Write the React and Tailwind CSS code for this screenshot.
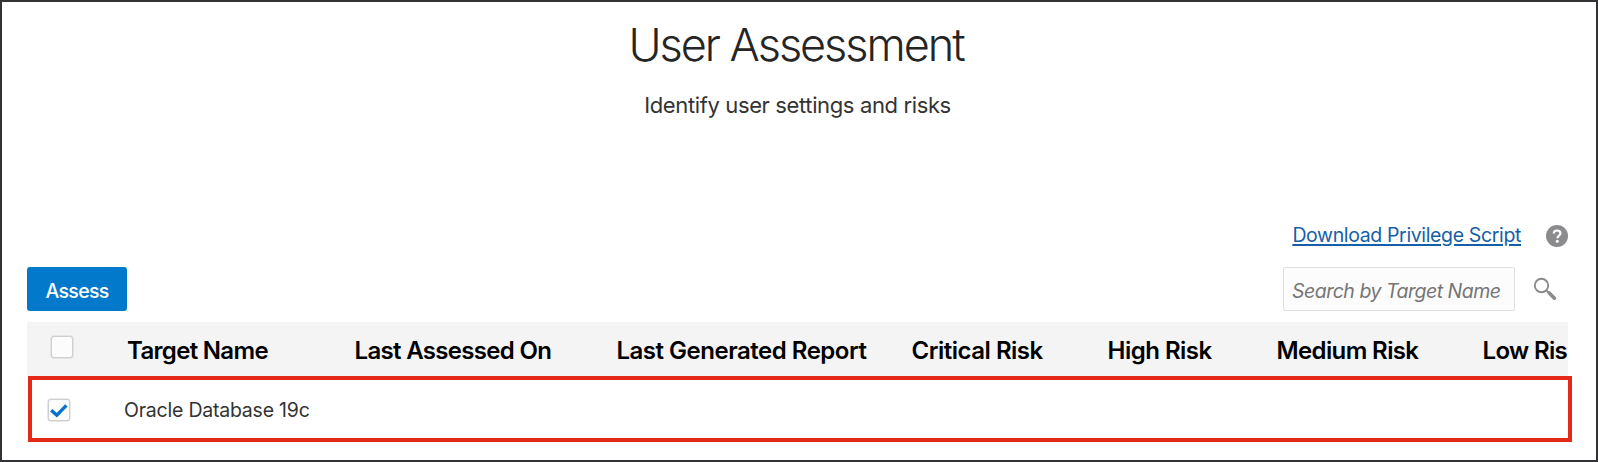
function HelpIcon() {
  return (
    <svg className="mt-[2px] block size-[22px]" viewBox="0 0 22 22" fill="none">
      <circle cx="11" cy="11" r="11" fill="#8b8b8d" />
      <path d="M7.8 8.6C7.8 6.6 9.2 5.5 11.1 5.5C13 5.5 14.4 6.6 14.4 8.3C14.4 10.6 11.4 10.6 11.4 13.3" stroke="#fff" strokeWidth="2.2" />
      <circle cx="11.3" cy="16.3" r="1.5" fill="#fff" />
    </svg>
  );
}

function SearchIcon() {
  return (
    <svg className="block size-6" viewBox="0 0 24 24" fill="none" stroke="#8b8b8d">
      <circle cx="8.5" cy="8.5" r="6.7" strokeWidth="1.9" />
      <path d="M13.4 13.4L16 16" strokeWidth="1.8" />
      <path d="M16 15.8L21.4 21.2" strokeWidth="3.6" strokeLinecap="round" />
    </svg>
  );
}

function Checkbox({ checked }) {
  return (
    <span className="flex size-[22px] items-center justify-center rounded-[3px] border-[1.5px] border-[#cfcfcf] bg-[#fcfcfc] shadow-[0_0_0_0.5px_#d4d4d4]">
      {checked && (
        <svg className="size-[18px] shrink-0" viewBox="0 0 18 18" fill="none">
          <path d="M1.2 9.2L6.8 14.2L16.4 4.4" stroke="#0572ce" strokeWidth="3.3" />
        </svg>
      )}
    </span>
  );
}

const columns = [
  { label: "Target Name", style: "w-[227.5px] tracking-[-0.68px]" },
  { label: "Last Assessed On", style: "w-[262px] tracking-[-0.68px]" },
  { label: "Last Generated Report", style: "w-[295px] tracking-[-0.49px]" },
  { label: "Critical Risk", style: "w-[196px] tracking-[-0.49px]" },
  { label: "High Risk", style: "w-[169px] tracking-[-0.5px]" },
  { label: "Medium Risk", style: "w-[206px] tracking-[-0.62px]" },
  { label: "Low Ris", style: "w-[90px] tracking-[-0.65px]" },
];

export default function App() {
  return (
    <main className="flex h-[462px] w-[1598px] flex-col overflow-hidden border-2 border-[#333335] bg-white font-['Inter',sans-serif]">
      <header className="flex flex-col items-center pt-[13px] pr-[3px] text-center">
        <h1 className="mr-[3px] h-[60px] text-[45px] leading-[60px] font-light tracking-[-2.05px] text-[#252525]">User Assessment</h1>
        <p className="mt-[14px] h-8 text-[22px] leading-8 tracking-[-0.37px] text-[#333]">Identify user settings and risks</p>
      </header>

      <div className="mt-[102px] flex h-6 items-center justify-end pr-[28px]">
        <a href="#" className="mr-[25px] text-[19.5px] leading-6 tracking-[-0.36px] whitespace-nowrap text-[#145fa8] underline decoration-[1.5px] underline-offset-[2px]">
          Download Privilege Script
        </a>
        <HelpIcon />
      </div>

      <div className="mt-5 flex h-11 items-center justify-between pr-[39px] pl-[25px]">
        <button className="h-11 w-[100px] rounded-[3px] bg-[#0279cb] pt-[5px] text-[19.5px] font-medium tracking-[-0.7px] text-white">Assess</button>
        <div className="flex items-center">
          <input
            placeholder="Search by Target Name"
            className="mr-[18px] h-[43.5px] w-[232px] rounded-[2px] border border-[#dfdfdf] bg-[#fcfcfc] pt-[4px] pr-0 pl-2 text-[19.5px] tracking-[-0.5px] placeholder:text-[#757575] placeholder:italic"
          />
          <SearchIcon />
        </div>
      </div>

      <section className="mt-[11px] flex flex-col pl-[25px]">
        <div className="flex h-[54px] w-[1541px] items-center overflow-hidden bg-[#f4f4f4]">
          <div className="mb-[4px] w-[100px] shrink-0 pl-[23.5px]">
            <Checkbox />
          </div>
          {columns.map((c) => (
            <div key={c.label} className={`shrink-0 text-[24px] leading-[30px] pt-[3px] font-semibold whitespace-nowrap text-black ${c.style}`}>
              {c.label}
            </div>
          ))}
        </div>
        <div className="ml-px flex h-[66px] w-[1544px] items-center border-4 border-[#e2291a]">
          <div className="w-[92px] pt-[2px] pl-[15.5px]">
            <Checkbox checked />
          </div>
          <div className="pt-px text-[19.5px] leading-6 tracking-[-0.22px] text-[#333]">Oracle Database 19c</div>
        </div>
      </section>
    </main>
  );
}
